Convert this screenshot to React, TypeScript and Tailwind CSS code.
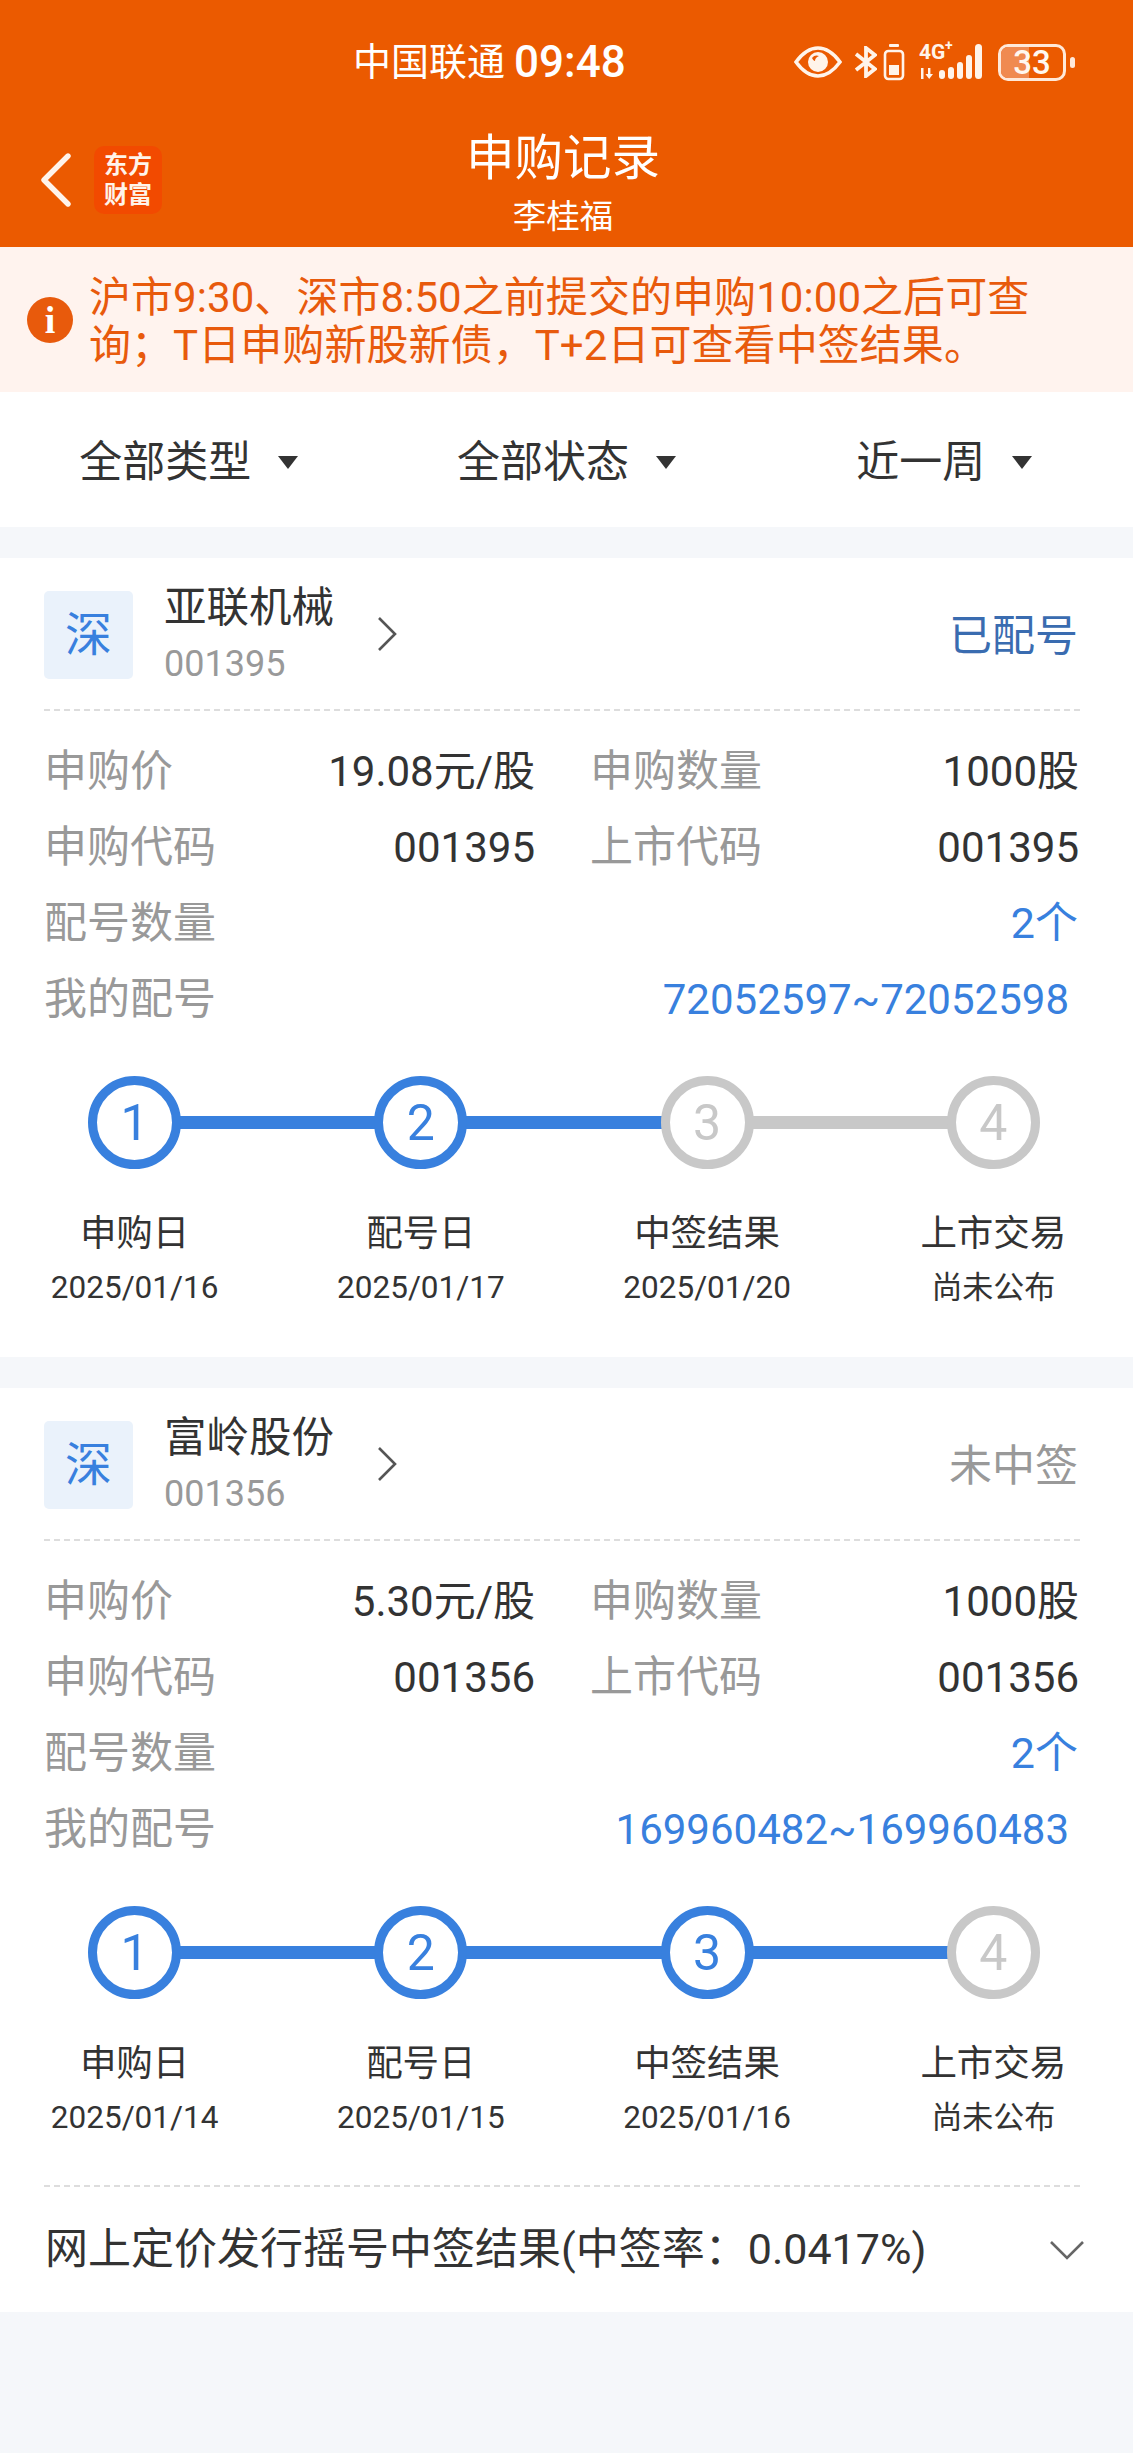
import React from "react";

type Step = { n: number; label: string; date: string; active: boolean; muted?: boolean };

function Stepper({ steps }: { steps: Step[] }) {
  return (
    <div className="grid grid-cols-4 gap-[87px] -ml-[9px] mr-[-13px] mt-[39px]">
      {steps.map((s, i) => (
        <div key={s.n} className="relative flex flex-col items-center">
          {i < 3 && (
            <div
              className={
                "absolute top-[40px] left-[100px] w-[287px] h-[13px] " +
                (s.active ? "bg-[#3880DE]" : "bg-[#C8C8C8]")
              }
            />
          )}
          <div
            className={
              "relative z-10 w-[93px] h-[93px] rounded-full bg-white border-[9px] flex items-center justify-center text-[50px] leading-none " +
              (s.active ? "border-[#3880DE] text-[#3880DE]" : "border-[#C8C8C8] text-[#C8C8C8]")
            }
          >
            {s.n}
          </div>
          <div className="mt-[40px] h-[50px] leading-[50px] text-[36.5px] text-[#333]">{s.label}</div>
          <div className={"mt-[5px] h-[48px] leading-[48px] text-[#333] " + (s.muted ? "text-[31px]" : "text-[31.5px]")}>{s.date}</div>
        </div>
      ))}
    </div>
  );
}

function Row({ a, b, c, d }: { a: string; b: string; c: string; d: string }) {
  return (
    <div className="grid grid-cols-2 gap-[56px] h-[76px] items-center text-[43px]">
      <div className="flex justify-between items-center">
        <span className="text-[#999]">{a}</span>
        <span className="text-[#333] text-[42px] -mr-[1px]">{b}</span>
      </div>
      <div className="flex justify-between items-center pr-[1px]">
        <span className="text-[#999]">{c}</span>
        <span className="text-[#333] text-[42px]">{d}</span>
      </div>
    </div>
  );
}

function Card({
  name,
  code,
  status,
  statusClass,
  price,
  range,
  steps,
  footer,
}: {
  name: string;
  code: string;
  status: string;
  statusClass: string;
  price: string;
  range: string;
  steps: Step[];
  footer?: React.ReactNode;
}) {
  return (
    <section className="bg-white pl-[44px] pr-[53px]">
      <div className="flex items-center pt-[33px] h-[151px] pb-[30px]">
        <div className="w-[89px] h-[88px] rounded-[5px] bg-[#EAF2FB] flex items-center justify-center text-[47px] text-[#3880DE]">
          深
        </div>
        <div className="ml-[31px] flex flex-col">
          <div className="text-[42.5px] leading-[54px] text-[#333] -mt-[3px]">{name}</div>
          <div className="text-[36px] leading-[44px] mt-[7px] text-[#999]">{code}</div>
        </div>
        <svg className="ml-[42px] mt-[-3px]" width="22" height="36" viewBox="0 0 22 36" fill="none">
          <path d="M3 2 L19 18 L3 34" stroke="#555" strokeWidth="2.6" />
        </svg>
        <div className={"ml-auto mr-[2px] mt-[3px] text-[43px] " + statusClass}>{status}</div>
      </div>
      <div className="border-t-2 border-dashed border-[#DDD] mb-[22px]" />
      <Row a="申购价" b={price} c="申购数量" d="1000股" />
      <Row a="申购代码" b={code} c="上市代码" d={code} />
      <div className="flex justify-between items-center h-[76px] text-[43px] pr-[2px]">
        <span className="text-[#999]">配号数量</span>
        <span className="text-[#3880DE]">2个</span>
      </div>
      <div className="flex justify-between items-center h-[76px] text-[43px] pr-[11px]">
        <span className="text-[#999]">我的配号</span>
        <span className="text-[#3880DE] text-[42px]">{range}</span>
      </div>
      <Stepper steps={steps} />
      {footer ? footer : <div className="h-[45px]" />}
    </section>
  );
}

function StatusIcons() {
  return (
    <div className="flex items-center ml-auto mr-[58px] h-[40px] text-white">
      <svg width="48" height="32" viewBox="0 0 48 32" fill="none">
        <path d="M2 16 C10 5 17 2 24 2 C31 2 38 5 46 16 C38 27 31 30 24 30 C17 30 10 27 2 16 Z" stroke="#FFF4EA" strokeWidth="3.6" />
        <circle cx="24" cy="16" r="10" fill="#FFF4EA" />
        <path d="M18 12 C20 9 23 9 25 10 C22 11 21 13 21 15 C20 15 19 14 18 12 Z" fill="#EB5A00" />
      </svg>
      <svg className="ml-[12px]" width="23" height="32" viewBox="0 0 23 32" fill="none">
        <path d="M2 8 L21 23 L12 30 L12 2 L21 9 L2 24" stroke="#FFF4EA" strokeWidth="3.8" />
      </svg>
      <svg className="ml-[6px]" width="22" height="38" viewBox="0 0 22 38" fill="none">
        <rect x="6" y="1" width="10" height="3" rx="1" fill="#FFF4EA" />
        <rect x="2" y="8" width="18" height="28" rx="3.5" stroke="#FFF4EA" strokeWidth="2.6" />
        <rect x="6" y="22" width="10" height="10" fill="#FFF4EA" />
      </svg>
      <div className="relative ml-[14px] w-[66px] h-[38px]">
        <span className="absolute left-0 -top-[2px] text-[21px] leading-[22px] font-bold text-[#FFF4EA]">4G</span>
        <span className="absolute left-[26px] -top-[5px] text-[14px] leading-[14px] font-bold text-[#FFF4EA]">+</span>
        <svg className="absolute left-0 top-0" width="66" height="38" viewBox="0 0 66 38" fill="#FFF4EA">
          <rect x="2" y="25" width="2.5" height="11" />
          <path d="M8 25 h2.4 v6 h2.6 l-3.8 5 -3.8 -5 h2.6 z" transform="translate(1 0)" />
          <rect x="20" y="27" width="6" height="9" rx="3" />
          <rect x="29" y="24" width="6" height="12" rx="3" />
          <rect x="38" y="19" width="6" height="17" rx="3" />
          <rect x="47" y="12" width="6" height="24" rx="3" />
          <rect x="56" y="1" width="7" height="35" rx="3.5" />
        </svg>
      </div>
      <div className="relative ml-[13px] w-[68px] h-[37px] rounded-[10px] border-[3px] border-[#FFE9D9] flex items-center justify-center overflow-hidden">
        <div className="absolute left-0 top-0 bottom-0 w-[45%] bg-[#F08A50]" />
        <span className="relative text-[33px] leading-none font-medium text-[#FFF8F0]">33</span>
      </div>
      <div className="ml-[4px] w-[5px] h-[11px] rounded-[3px] bg-[#FFE9D9]" />
    </div>
  );
}

export default function App() {
  const s1: Step[] = [
    { n: 1, label: "申购日", date: "2025/01/16", active: true },
    { n: 2, label: "配号日", date: "2025/01/17", active: true },
    { n: 3, label: "中签结果", date: "2025/01/20", active: false },
    { n: 4, label: "上市交易", date: "尚未公布", active: false, muted: true },
  ];
  const s2: Step[] = [
    { n: 1, label: "申购日", date: "2025/01/14", active: true },
    { n: 2, label: "配号日", date: "2025/01/15", active: true },
    { n: 3, label: "中签结果", date: "2025/01/16", active: true },
    { n: 4, label: "上市交易", date: "尚未公布", active: false, muted: true },
  ];
  return (
    <div className="min-h-[2453px] bg-[#F5F7FA] font-['Roboto','Noto_Sans_CJK_SC',sans-serif]">
      <header className="h-[247px] bg-[#EB5A00] text-white">
        <div className="h-[124px] flex items-center">
          <div className="ml-[353px] text-[38px] leading-none">中国联通</div>
          <div className="ml-[9px] text-[44px] leading-none font-medium">09:48</div>
          <StatusIcons />
        </div>
        <div className="grid grid-cols-[1fr_auto_1fr]">
          <div className="flex items-center pl-[40px] h-[112px]">
            <svg width="32" height="54" viewBox="0 0 32 54" fill="none">
              <path d="M28 3 L4 27 L28 51" stroke="#FFF4EA" strokeWidth="5.4" strokeLinecap="round" strokeLinejoin="round" />
            </svg>
            <div className="ml-[22px] w-[68px] h-[68px] rounded-[10px] bg-[#F24A00] flex flex-col items-center justify-center text-[24px] font-bold text-[#FFF4EA]">
              <div className="h-[30px] leading-[30px]">东方</div>
              <div className="h-[30px] leading-[30px]">财富</div>
            </div>
          </div>
          <div className="flex flex-col items-center mr-[7px] pt-[1px]">
            <div className="text-[48.5px] leading-[68px]">申购记录</div>
            <div className="text-[33.5px] leading-[44px] mt-[2px]">李桂福</div>
          </div>
          <div />
        </div>
      </header>

      <div className="h-[146px] bg-[#FFF3EE] flex items-center">
        <div className="ml-[27px] w-[46px] h-[46px] rounded-full bg-[#E85A0C] flex items-center justify-center text-white text-[38px] leading-none font-bold font-['Liberation_Serif']">
          i
        </div>
        <div className="ml-[16px] w-[985px] mt-[3px] text-[42px] leading-[48px] tracking-[0.06px] text-[#E85A0C]">
          沪市9:30、深市8:50之前提交的申购10:00之后可查询；T日申购新股新债，T+2日可查看中签结果。
        </div>
      </div>

      <div className="h-[135px] bg-white grid grid-cols-3 items-center text-[43px] text-[#333] -mt-[1px] pt-[6px]">
        {["全部类型", "全部状态", "近一周"].map((t) => (
          <div key={t} className="flex items-center justify-center">
            <span>{t}</span>
            <span className="ml-[27px] w-0 h-0 border-x-[10px] border-x-transparent border-t-[13px] border-t-[#333]" />
          </div>
        ))}
      </div>

      <div className="h-[31px]" />

      <Card
        name="亚联机械"
        code="001395"
        status="已配号"
        statusClass="text-[#3A6CB0]"
        price="19.08元/股"
        range="72052597~72052598"
        steps={s1}
      />

      <div className="h-[31px]" />

      <Card
        name="富岭股份"
        code="001356"
        status="未中签"
        statusClass="text-[#999]"
        price="5.30元/股"
        range="169960482~169960483"
        steps={s2}
        footer={
          <>
            <div className="mt-[43px] border-t-2 border-dashed border-[#DDD]" />
            <div className="h-[125px] flex items-center justify-between text-[43px] text-[#333] pl-px">
              <span>网上定价发行摇号中签结果(中签率：0.0417%)</span>
              <svg className="-mr-[5px]" width="36" height="20" viewBox="0 0 36 20" fill="none">
                <path d="M2 2 L18 18 L34 2" stroke="#666" strokeWidth="2.6" />
              </svg>
            </div>
          </>
        }
      />
    </div>
  );
}
